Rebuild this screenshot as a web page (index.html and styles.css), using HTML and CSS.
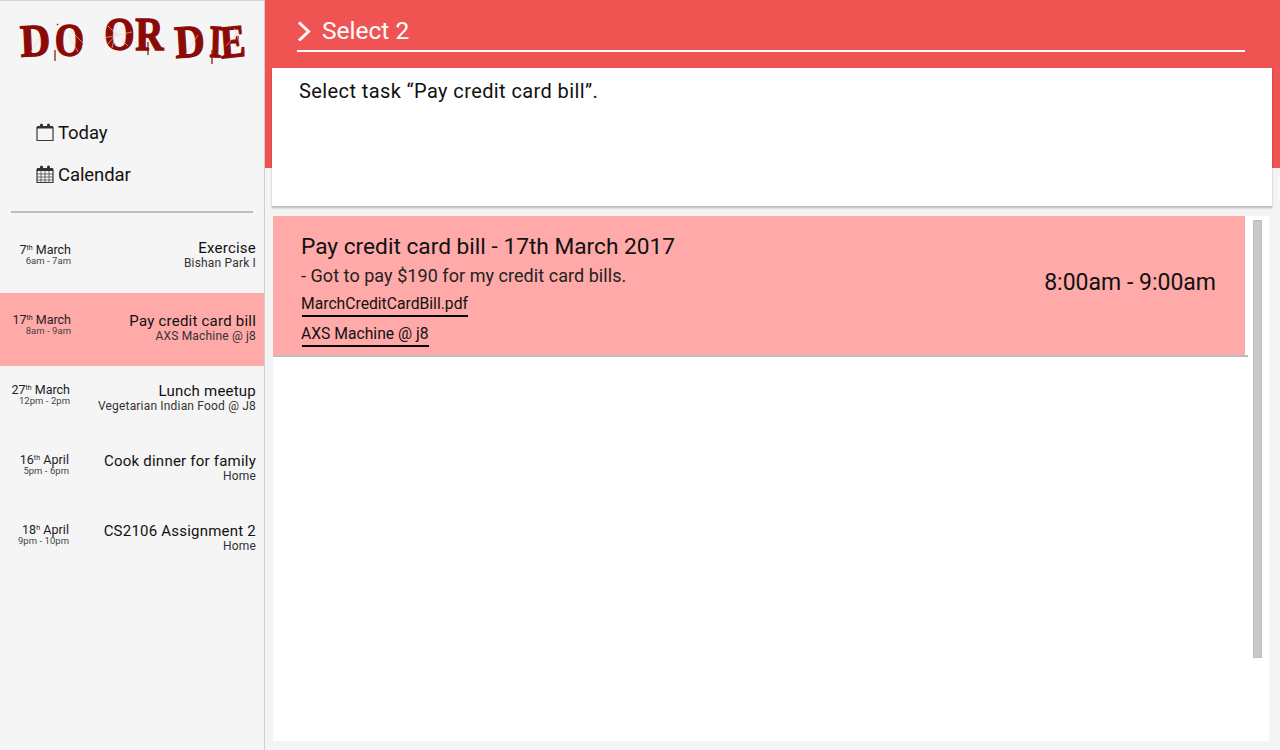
FILE: index.html
```html
<!DOCTYPE html>
<html lang="en">
<head>
<meta charset="utf-8">
<title>Do or Die</title>
<link rel="stylesheet" href="styles.css">
</head>
<body>
<div class="app">
  <aside class="sidebar">
    <div class="logo">
      <span class="logo-word w1"><span class="lt l-d">D</span><span class="lt l-o">O</span></span>
      <span class="logo-word w2"><span class="lt l-o2">O</span><span class="lt l-r">R</span></span>
      <span class="logo-word w3"><span class="lt l-d2">D</span><span class="lt l-i">I</span><span class="lt l-e">E</span></span>
      <svg class="logo-marks" viewBox="0 0 264 80" width="264" height="80">
        <path class="drip" d="M55 50V61M148 42V55M212 50V64M57 24L58 25"/>
        <path class="scratch" d="M40 37L31 52M68 34L78 52M70 30L84 44M108 26L128 46M118 22L112 48M104 38L132 32M122 28L108 44M238 32L226 46M234 28L240 44M198 35L186 54"/>
      </svg>
    </div>
    <nav class="nav">
      <a class="nav-item">
        <svg class="nav-icon" viewBox="0 0 18 19" width="18" height="19"><path class="ic" d="M1 4.500h16v13H1z"/><rect class="icf" x="1" y="3" width="16" height="2.500"/><rect class="icf" x="4" y="0.500" width="3" height="4.500" rx="1.500"/><rect class="icf" x="11" y="0.500" width="3" height="4.500" rx="1.500"/></svg>
        <span>Today</span>
      </a>
      <a class="nav-item">
        <svg class="nav-icon" viewBox="0 0 18 19" width="18" height="19"><path class="ic" d="M1 4.500h16v13H1z"/><path class="ic thin" d="M5 6v11M9 6v11M13 6v11M1 9h16M1 12h16M1 15h16"/><rect class="icf" x="1" y="3" width="16" height="3"/><rect class="icf" x="4" y="0.500" width="3" height="4.500" rx="1.500"/><rect class="icf" x="11" y="0.500" width="3" height="4.500" rx="1.500"/></svg>
        <span>Calendar</span>
      </a>
    </nav>
    <hr class="divider">
    <ul class="tasks">
      <li class="task first">
        <div class="when"><div class="date">7<sup>th</sup> March</div><div class="time">6am - 7am</div></div>
        <div class="what"><div class="name">Exercise</div><div class="place">Bishan Park I</div></div>
      </li>
      <li class="task active">
        <div class="when"><div class="date">17<sup>th</sup> March</div><div class="time">8am - 9am</div></div>
        <div class="what"><div class="name">Pay credit card bill</div><div class="place">AXS Machine @ j8</div></div>
      </li>
      <li class="task mid">
        <div class="when"><div class="date">27<sup>th</sup> March</div><div class="time">12pm - 2pm</div></div>
        <div class="what"><div class="name">Lunch meetup</div><div class="place">Vegetarian Indian Food @ J8</div></div>
      </li>
      <li class="task late">
        <div class="when"><div class="date">16<sup>th</sup> April</div><div class="time">5pm - 6pm</div></div>
        <div class="what"><div class="name">Cook dinner for family</div><div class="place">Home</div></div>
      </li>
      <li class="task late">
        <div class="when"><div class="date">18<sup>h</sup> April</div><div class="time">9pm - 10pm</div></div>
        <div class="what"><div class="name">CS2106 Assignment 2</div><div class="place">Home</div></div>
      </li>
    </ul>
  </aside>
  <main class="main">
    <header class="hero">
      <div class="hero-title">
        <svg class="chev" viewBox="0 0 14 20" width="14" height="20"><path d="M2 1.500L11.500 10.500L2 19.500"/></svg>
        <span>Select 2</span>
      </div>
      <section class="prompt">Select task “Pay credit card bill”.</section>
    </header>
    <div class="edge-marks"><span class="edge-mark"></span><span class="edge-mark"></span></div>
    <section class="panel">
      <div class="list">
        <article class="detail">
          <div class="detail-left">
            <h2 class="detail-title">Pay credit card bill - 17th March 2017</h2>
            <p class="detail-desc">- Got to pay $190 for my credit card bills.</p>
            <div class="tag-row"><a class="tag">MarchCreditCardBill.pdf</a></div>
            <div class="tag-row"><a class="tag">AXS Machine @ j8</a></div>
          </div>
          <div class="detail-time">8:00am - 9:00am</div>
        </article>
      </div>
      <div class="scrollbar"></div>
    </section>
  </main>
</div>
</body>
</html>
```
FILE: styles.css
```css
* { box-sizing: border-box; }
html, body { margin: 0; height: 750px; overflow: hidden; }
body { font-family: Roboto, "Liberation Sans", sans-serif; color: #111; background: #f4f4f4; }
.app { display: flex; height: 750px; }

.sidebar { width: 265px; flex: none; background: #f5f5f5; border-right: 1px solid #cfcfcf; border-top: 1px solid #d8d8d8; }

.logo { position: relative; height: 111px; display: flex; padding: 7px 0 0 20px; color: #8b0a06; font-family: "Liberation Serif", serif; font-weight: 700; font-size: 46px; line-height: 56px; -webkit-text-stroke: 1.300px #8b0a06; }
.logo-word { display: flex; height: 56px; }
.lt { display: block; text-align: center; transform-origin: center bottom; }
.w1 { transform: translateY(5px); }
.w2 { transform: translateY(-1px); margin-left: 20px; }
.w3 { transform: translateY(6px); margin-left: 13px; }
.l-d { width: 30px; transform: scaleX(.9) rotate(-3deg); }
.l-o { width: 30px; margin-left: 2px; transform: scaleX(.82); }
.l-o2 { width: 31px; transform: scaleX(.85); }
.l-r { width: 29px; transform: scaleX(.85); }
.l-d2 { width: 30px; transform: scaleX(.9) rotate(-4deg); }
.l-i { width: 11px; margin-left: 2px; transform: scaleX(.7) rotate(2deg); }
.l-e { width: 25px; margin-left: 2px; transform: scaleX(.82) rotate(-5deg); }
.logo-marks { position: absolute; left: 0; top: -1px; }
.drip { fill: none; stroke: #8b0a06; stroke-width: 1.200; }
.scratch { fill: none; stroke: #f2d0d0; stroke-width: .6; }

.nav { padding-left: 36px; }
.nav-item { display: flex; align-items: center; gap: 4px; height: 42px; font-size: 18.500px; letter-spacing: -.08px; color: #111; }
.nav-icon { flex: none; margin-top: -2px; }
.ic { fill: none; stroke: #3a3a3a; stroke-width: 1.200; }
.ic.thin { stroke-width: .7; }
.icf { fill: #333; }

.divider { margin: 15px 11px 0; border: 0; border-top: 2px solid #bdbdbd; height: 0; width: 242px; }
.tasks { list-style: none; margin: 10px 0 0; padding: 0; }
.task { height: 70px; display: flex; justify-content: space-between; padding: 17px 8px 0 0; }
.task.active { background: #ffa9a9; height: 73px; padding-top: 20px; }
.when { width: 71px; text-align: right; margin-top: -1px; }
.task.first .when { margin-top: 2px; }
.task.mid .when { width: 70px; }
.task.late .when { width: 69px; }
.task.late .date { letter-spacing: .05px; }
.date { font-size: 12.500px; line-height: 15px; color: #222; }
.date sup { font-size: 7px; line-height: 0; vertical-align: 4px; }
.time { font-size: 9.500px; line-height: 10px; color: #444; margin-top: -1px; letter-spacing: .03px; }
.what { text-align: right; margin-top: 0; }
.name { font-size: 15px; line-height: 17px; color: #111; letter-spacing: .22px; }
.place { font-size: 12px; line-height: 14px; color: #333; letter-spacing: .18px; margin-top: -1px; }

.main { position: relative; flex: 1; min-width: 0; display: flex; flex-direction: column; }
.hero { height: 168px; background: #f05452; padding: 16px 8px 0 7px; flex: none; }
.hero-title { display: flex; align-items: center; gap: 11px; height: 36px; margin: 0 27px 0 25px; border-bottom: 2px solid #fff; color: #fff; font-size: 24.500px; padding-bottom: 5px; }
.chev { flex: none; margin-top: 1px; }
.chev path { fill: none; stroke: #fff; stroke-width: 3; }
.prompt { height: 139px; margin-top: 16px; background: #fff; border-bottom: 1px solid #bbb; box-shadow: 0 1px 2px rgba(0,0,0,.25); padding: 10px 27px; font-size: 20px; line-height: 26px; color: #111; letter-spacing: .4px; }

.edge-marks { position: absolute; right: 0; top: 175px; display: flex; flex-direction: column; gap: 1px; }
.edge-mark { display: block; width: 2px; height: 12px; background: #fbfbfb; }

.panel { margin: 48px 11px 9px 8px; flex: 1; background: #fff; display: flex; align-items: flex-start; padding-right: 7px; }
.list { flex: 1; min-width: 0; }
.detail { height: 141px; background: linear-gradient(#ffa9a9, #ffa9a9) no-repeat 0 0 / 972px 139px; border-bottom: 2px solid #bdbdbd; display: flex; justify-content: space-between; align-items: center; padding: 0 32px 0 28px; }
.detail-left { align-self: flex-start; }
.detail-title { margin: 16px 0 0; font-size: 22.700px; font-weight: 400; line-height: 30px; color: #111; }
.detail-desc { margin: 0; font-size: 18px; line-height: 28px; color: #222; letter-spacing: .05px; }
.tag-row { height: 30px; line-height: 0; padding-top: 1px; }
.tag { display: inline-block; margin-left: 1px; padding-top: 2px; text-indent: -1px; font-size: 15.700px; line-height: 22px; color: #111; border-bottom: 2px solid #000; }
.detail-time { font-size: 23px; color: #111; margin-top: -7px; }
.scrollbar { flex: none; width: 9px; height: 438px; margin: 4px 0 0 5px; background: #c8c8c8; border: 1px solid #bdbdbd; }
```
